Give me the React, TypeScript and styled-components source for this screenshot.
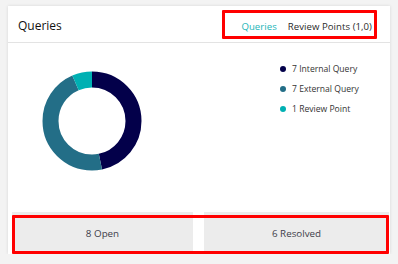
import React from "react";
import styled, { createGlobalStyle } from "styled-components";

const Global = createGlobalStyle`
  html, body { margin: 0; padding: 0; background: #f3f3f3; }
  body { font-family: "Open Sans", "Noto Sans", sans-serif; }
`;

const Page = styled.div`
  padding: 6px 8px 0 8px;
  width: 382px;
`;

const Card = styled.div`
  background: #fff;
  height: 248px;
  box-shadow: 0 0 3px rgba(0, 0, 0, 0.12);
  display: flex;
  flex-direction: column;
`;

const Header = styled.div`
  position: relative;
  height: 36px;
  border-bottom: 1px solid #e3e3e3;
  display: flex;
  align-items: center;
  justify-content: space-between;
  padding: 0 18px 0 10px;
`;

const Title = styled.div`
  font-size: 12px;
  color: #111;
  margin-top: 2px;
`;

const Tabs = styled.div`
  display: flex;
  gap: 11px;
  align-items: center;
  margin-top: 4px;
`;

const Tab = styled.div<{ $active?: boolean }>`
  font-size: 9.6px;
  color: ${(p) => (p.$active ? "#1cb5b8" : "#2a2a2a")};
  letter-spacing: 0.05px;
`;

const Highlight = styled.div`
  position: absolute;
  border: 3px solid #ff0000;
  border-radius: 1px;
  pointer-events: none;
`;

const Body = styled.div`
  flex: 1;
  display: flex;
  padding: 28px 0 0 34px;
`;

const Legend = styled.div`
  margin-left: 138px;
  margin-top: -8px;
  display: flex;
  flex-direction: column;
  gap: 8px;
`;

const LegendItem = styled.div`
  display: flex;
  align-items: center;
  gap: 6px;
  font-size: 8.6px;
  color: #333;
  height: 12px;
`;

const Dot = styled.span<{ $color: string }>`
  width: 6px;
  height: 6px;
  border-radius: 50%;
  background: ${(p) => p.$color};
`;

const Footer = styled.div`
  position: relative;
  height: 42px;
  display: grid;
  grid-template-columns: 181px 1fr;
  gap: 11px;
  padding: 0 1px 0 4px;
`;

const Stat = styled.div`
  background: #ececec;
  display: flex;
  align-items: center;
  justify-content: center;
  padding-top: 1px;
  font-size: 9.8px;
  color: #3d3d4a;
`;

const data = [
  { label: "7 Internal Query", value: 7, color: "#03004a" },
  { label: "7 External Query", value: 7, color: "#236e87" },
  { label: "1 Review Point", value: 1, color: "#00b0b3" },
];

function Donut() {
  const total = data.reduce((s, d) => s + d.value, 0);
  const r = 41.5;
  const c = 2 * Math.PI * r;
  let acc = 0;
  return (
    <svg width="100" height="100" viewBox="0 0 100 100">
      <g transform="rotate(-90 50 50)">
        {data.map((d) => {
          const len = (d.value / total) * c;
          const el = (
            <circle
              key={d.label}
              cx="50"
              cy="50"
              r={r}
              fill="none"
              stroke={d.color}
              strokeWidth="16"
              strokeDasharray={`${len} ${c - len}`}
              strokeDashoffset={-acc}
            />
          );
          acc += len;
          return el;
        })}
      </g>
    </svg>
  );
}

export default function App() {
  return (
    <Page>
      <Global />
      <Card>
        <Header>
          <Title>Queries</Title>
          <Tabs>
            <Tab $active>Queries</Tab>
            <Tab>Review Points (1,0)</Tab>
          </Tabs>
          <Highlight style={{ left: 214, top: 4, width: 149, height: 23 }} />
        </Header>
        <Body>
          <Donut />
          <Legend>
            {data.map((d) => (
              <LegendItem key={d.label}>
                <Dot $color={d.color} />
                {d.label}
              </LegendItem>
            ))}
          </Legend>
        </Body>
        <Footer>
          <Stat>8 Open</Stat>
          <Stat>6 Resolved</Stat>
          <Highlight style={{ left: 4, top: 3, width: 371, height: 33 }} />
        </Footer>
      </Card>
    </Page>
  );
}
